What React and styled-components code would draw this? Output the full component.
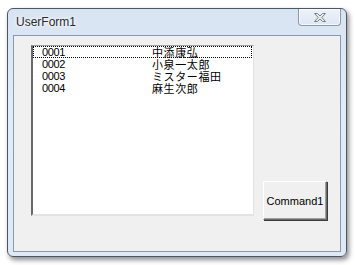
import React from 'react';
import styled, { createGlobalStyle } from 'styled-components';

const Global = createGlobalStyle`
  html, body {
    margin: 0;
    background: #ffffff;
  }
  body {
    font-family: "Liberation Sans", "Noto Sans CJK JP", sans-serif;
  }
`;

const Desktop = styled.div`
  width: 356px;
  height: 265px;
  padding: 8px 0 0 7px;
  box-sizing: border-box;
`;

const Window = styled.div`
  width: 340px;
  height: 249px;
  box-sizing: border-box;
  display: flex;
  flex-direction: column;
  border: 1px solid #4e5663;
  border-radius: 6px;
  background: linear-gradient(#d8e4f2, #e2ecf8 40%, #dfe9f6);
  box-shadow: 2px 3px 5px rgba(0, 0, 0, 0.45);
`;

const TitleBar = styled.div`
  height: 26px;
  display: flex;
  align-items: flex-start;
  justify-content: space-between;
  padding-left: 8px;
`;

const Title = styled.span`
  font-family: "Liberation Sans", sans-serif;
  font-size: 12px;
  line-height: 14px;
  margin-top: 6px;
  color: #2a2a2a;
  text-shadow: 0 0 6px #ffffff, 0 0 3px #ffffff;
`;

const CloseButton = styled.div`
  width: 43px;
  height: 17px;
  margin-right: 5px;
  box-sizing: border-box;
  border: 1px solid #8c99ab;
  border-top: none;
  border-radius: 0 0 4px 4px;
  background: linear-gradient(#eef3fa, #dde7f3);
  display: flex;
  align-items: center;
  justify-content: center;
  box-shadow: inset 0 0 0 1px rgba(255, 255, 255, 0.7);
`;

const Client = styled.div`
  flex: 1;
  margin: 0 5px 4px 5px;
  border: 1px solid #8a9aae;
  background: #f0f0f0;
  display: flex;
  align-items: flex-start;
  padding: 9px 0 0 17px;
  gap: 9px;
`;

const ListBox = styled.div`
  width: 223px;
  height: 171px;
  box-sizing: border-box;
  background: #ffffff;
  border-left: 2px solid #696969;
  border-top: 1px solid #a0a0a0;
  border-right: 1px solid #e3e3e3;
  border-bottom: 2px solid #e3e3e3;
  padding: 0 1px 0 0;
`;

const Row = styled.div`
  display: flex;
  align-items: center;
  height: 12px;
  color: #000;
  box-sizing: border-box;
  outline: ${p => (p.$focused ? '1px dotted #000' : 'none')};
  outline-offset: -1px;
`;

const Code = styled.div`
  width: 119px;
  height: 12px;
  padding-left: 9px;
  box-sizing: border-box;
  font-family: "Liberation Sans", sans-serif;
  font-size: 11px;
  line-height: 12px;
  letter-spacing: -0.4px;
`;

const Name = styled.div`
  height: 12px;
  font-family: "Noto Sans CJK JP", sans-serif;
  font-size: 11px;
  line-height: 12px;
  letter-spacing: 0.6px;
  white-space: nowrap;
`;

const CommandButton = styled.button`
  margin-top: 136px;
  width: 64px;
  height: 39px;
  box-sizing: border-box;
  background: #f0f0f0;
  border: 1px solid;
  border-color: #ffffff #696969 #696969 #ffffff;
  box-shadow: inset -1px -1px 0 #a0a0a0, 1px 1px 0 #3c3c3c;
  font-family: "Liberation Sans", sans-serif;
  font-size: 11px;
  color: #000;
  padding: 0;
`;

const rows = [
  ['0001', '中添康弘'],
  ['0002', '小泉一太郎'],
  ['0003', 'ミスター福田'],
  ['0004', '麻生次郎'],
];

const CloseIcon = () => (
  <svg width="14" height="11" viewBox="0 0 14 11">
    <path
      d="M1.5 1.5 H4.5 L7 4 L9.5 1.5 H12.5 L8.8 5.5 L12.5 9.5 H9.5 L7 7 L4.5 9.5 H1.5 L5.2 5.5 Z"
      fill="#e8ecf1"
      stroke="#7a7f88"
      strokeWidth="1"
      strokeLinejoin="round"
    />
  </svg>
);

export default function App() {
  return (
    <Desktop>
      <Global />
      <Window>
        <TitleBar>
          <Title>UserForm1</Title>
          <CloseButton>
            <CloseIcon />
          </CloseButton>
        </TitleBar>
        <Client>
          <ListBox>
            {rows.map(([code, name], i) => (
              <Row key={code} $focused={i === 0}>
                <Code>{code}</Code>
                <Name>{name}</Name>
              </Row>
            ))}
          </ListBox>
          <CommandButton>Command1</CommandButton>
        </Client>
      </Window>
    </Desktop>
  );
}
